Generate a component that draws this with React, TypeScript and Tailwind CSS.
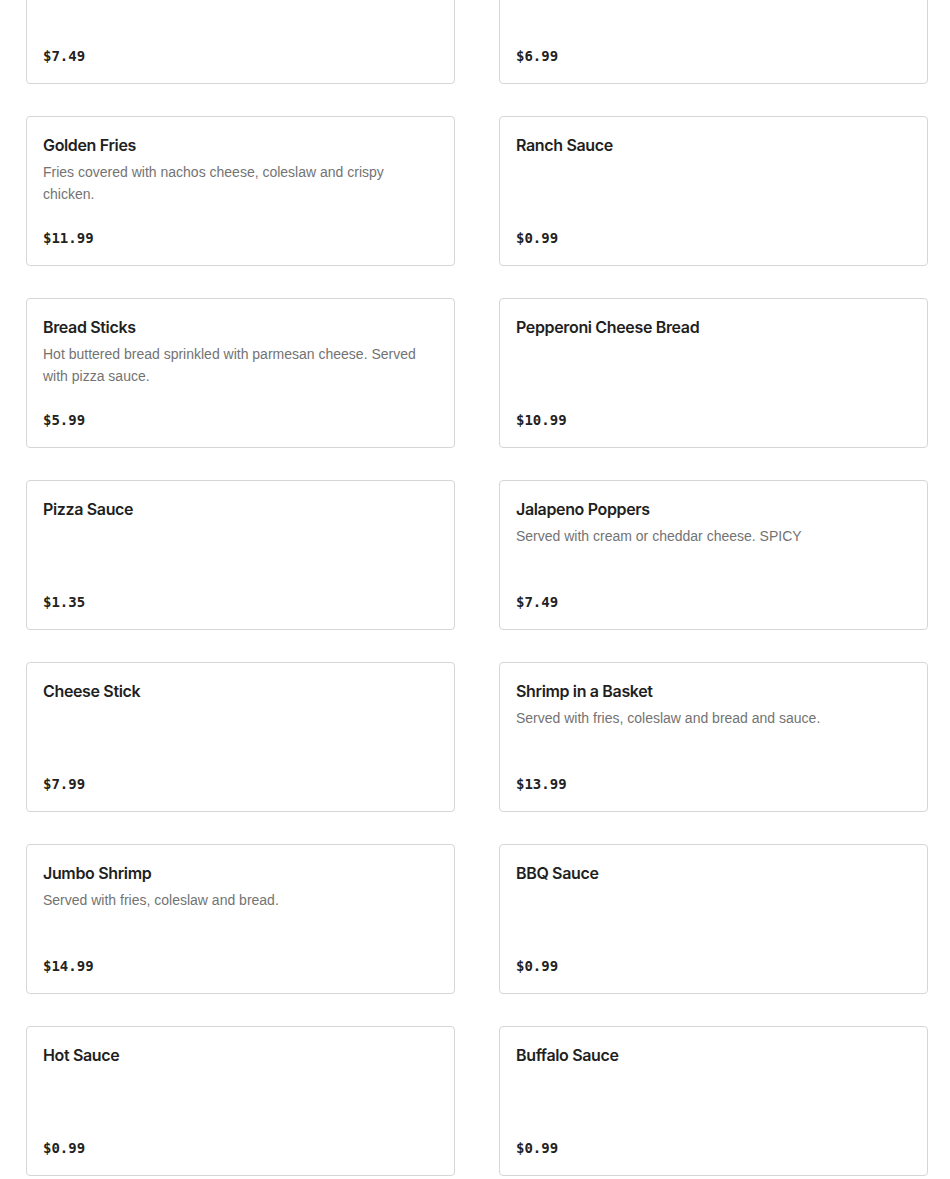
type Item = {
  name: string;
  description?: string;
  price: string;
};

const items: Item[] = [
  { name: 'Chicken Wings', price: '$7.49' },
  { name: 'Onion Rings', price: '$6.99' },
  { name: 'Golden Fries', description: 'Fries covered with nachos cheese, coleslaw and crispy chicken.', price: '$11.99' },
  { name: 'Ranch Sauce', price: '$0.99' },
  { name: 'Bread Sticks', description: 'Hot buttered bread sprinkled with parmesan cheese. Served with pizza sauce.', price: '$5.99' },
  { name: 'Pepperoni Cheese Bread', price: '$10.99' },
  { name: 'Pizza Sauce', price: '$1.35' },
  { name: 'Jalapeno Poppers', description: 'Served with cream or cheddar cheese. SPICY', price: '$7.49' },
  { name: 'Cheese Stick', price: '$7.99' },
  { name: 'Shrimp in a Basket', description: 'Served with fries, coleslaw and bread and sauce.', price: '$13.99' },
  { name: 'Jumbo Shrimp', description: 'Served with fries, coleslaw and bread.', price: '$14.99' },
  { name: 'BBQ Sauce', price: '$0.99' },
  { name: 'Hot Sauce', price: '$0.99' },
  { name: 'Buffalo Sauce', price: '$0.99' },
];

function MenuCard({ item }: { item: Item }) {
  return (
    <div className="flex h-[150px] flex-col justify-between rounded-[4px] border border-[#d6d6d6] bg-white px-4 pt-[18px] pb-[17px]">
      <div>
        <h3 className="text-[16px] leading-5 font-semibold tracking-[-0.35px] text-[#1f1f1f]">{item.name}</h3>
        {item.description && (
          <p className="mt-[6px] pr-4 font-['Liberation_Sans',sans-serif] text-[14px] leading-[22px] text-[#737373]">
            {item.description}
          </p>
        )}
      </div>
      <div className="font-['DejaVu_Sans_Mono',monospace] text-[14px] leading-5 font-bold text-[#222]">
        {item.price}
      </div>
    </div>
  );
}

export default function App() {
  return (
    <div className="min-h-screen overflow-hidden bg-white font-['Inter','Liberation_Sans',sans-serif]">
      <ul className="-mt-[66px] grid grid-cols-2 gap-x-[44px] gap-y-[32px] pr-[22px] pl-[26px]" role="list">
        {items.map((item, index) => (
          <li key={index}>
            <MenuCard item={item} />
          </li>
        ))}
      </ul>
    </div>
  );
}
